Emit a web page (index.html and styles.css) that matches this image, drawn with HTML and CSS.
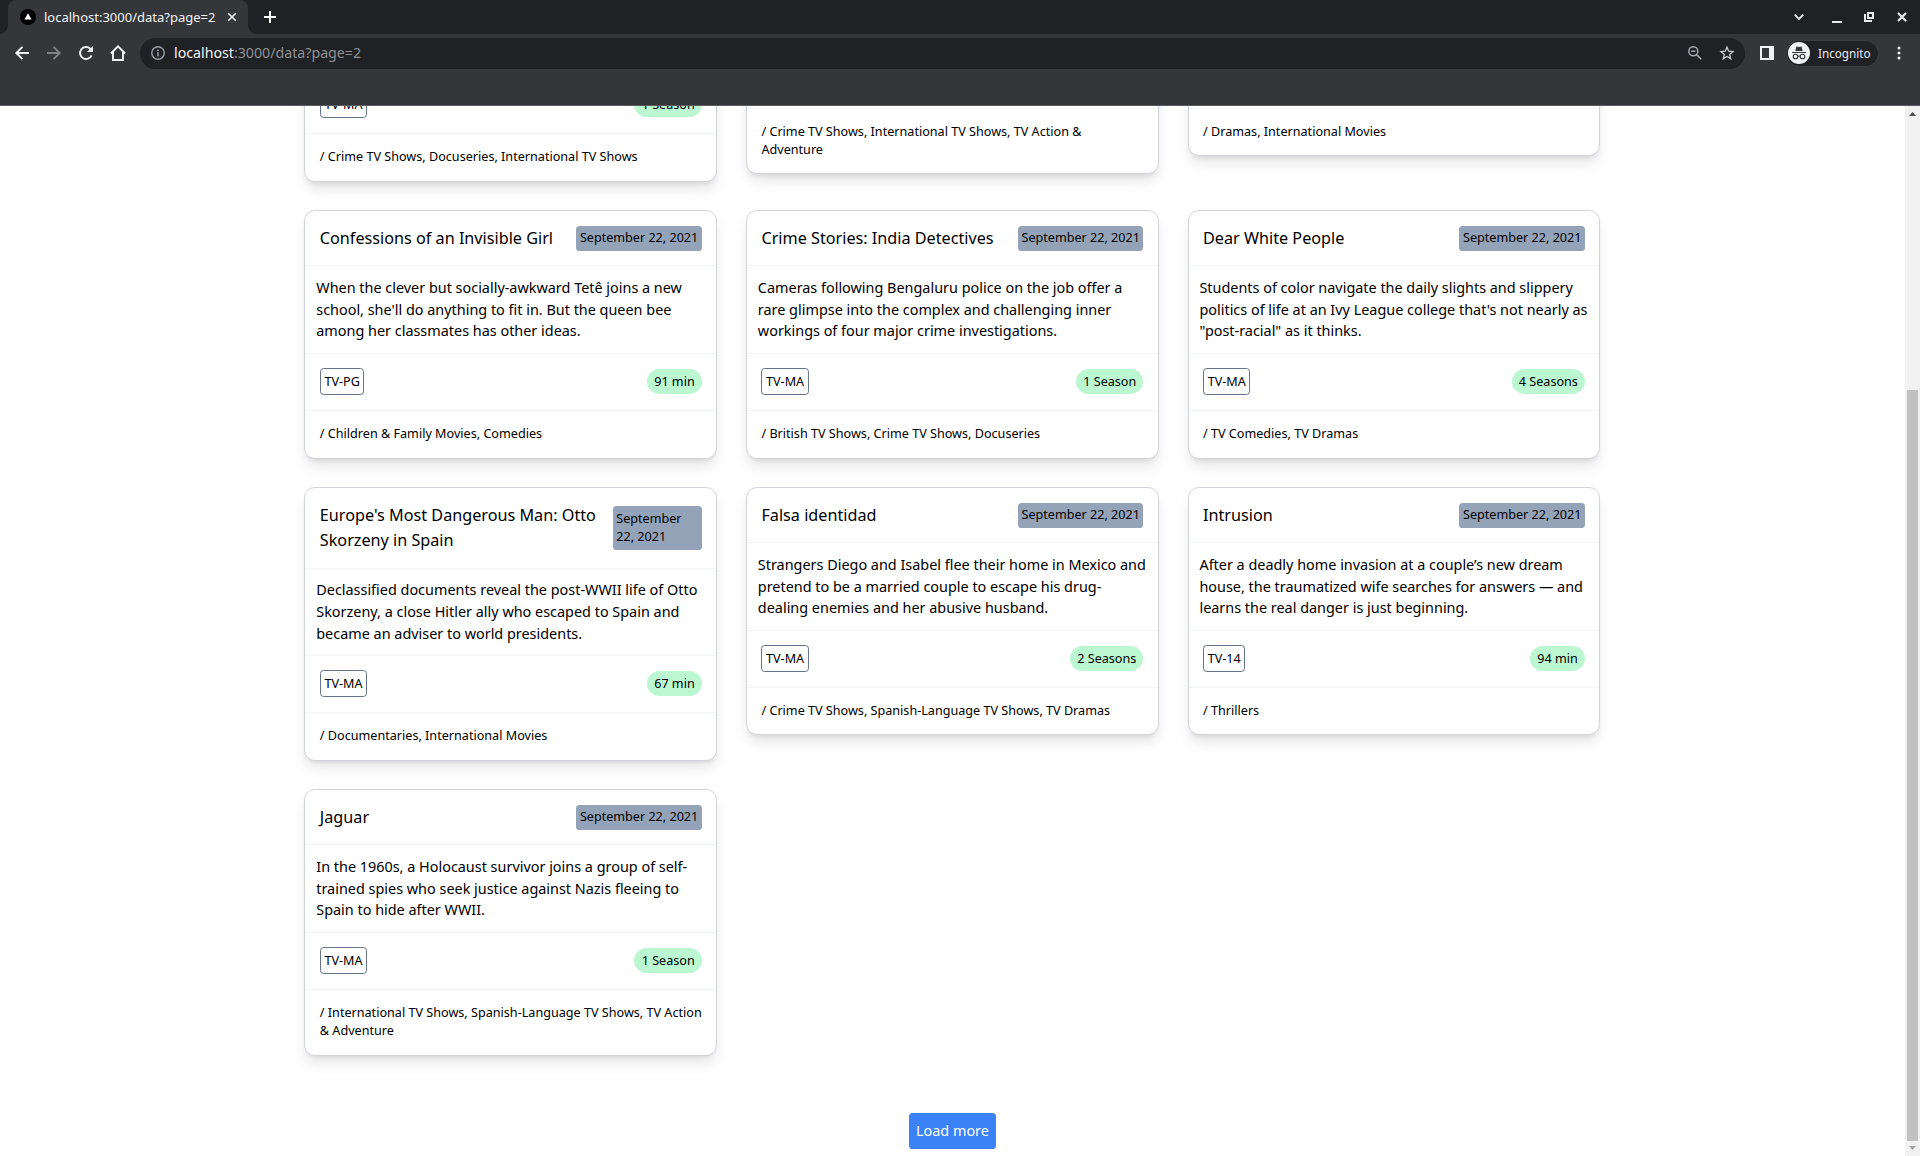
FILE: index.html
```html
<!DOCTYPE html>
<html lang="en">
<head>
<meta charset="utf-8">
<title>localhost:3000/data?page=2</title>
<link rel="stylesheet" href="styles.css">
</head>
<body>
<header class="browser">
  <div class="tabstrip">
    <div class="tab">
      <svg class="favicon" viewBox="0 0 16 16"><circle cx="8" cy="8" r="8" fill="#000"/><path d="M8 4.2 11.6 10.6H4.4z" fill="#fff"/></svg>
      <span class="tab-title">localhost:3000/data?page=2</span>
      <svg class="tab-close" viewBox="0 0 10 10"><path d="M1.2 1.2l7.6 7.6M8.8 1.2L1.2 8.8" stroke="#f1f3f4" stroke-width="1.6"/></svg>
    </div>
    <svg class="new-tab" viewBox="0 0 12 12"><path d="M6 0v12M0 6h12" stroke="#fff" stroke-width="2"/></svg>
    <div class="window-controls">
      <svg width="10" height="6" viewBox="0 0 10 6"><path d="M.7.7 5 5 9.300.7" fill="none" stroke="#e8eaed" stroke-width="1.8"/></svg>
      <svg class="minimize" width="10" height="10" viewBox="0 0 10 10"><path d="M0 9h10" stroke="#e8eaed" stroke-width="2"/></svg>
      <svg class="restore" width="10" height="10" viewBox="0 0 10 10"><path d="M4 1h5v5H4zM1 2v7h7" fill="none" stroke="#e8eaed" stroke-width="2"/></svg>
      <svg class="close" width="10" height="10" viewBox="0 0 10 10"><path d="M1 1l8 8M9 1L1 9" stroke="#e8eaed" stroke-width="2.2"/></svg>
    </div>
  </div>
  <div class="toolbar">
    <div class="nav">
      <svg width="14" height="14" viewBox="0 0 14 14"><path d="M14 7H1.500M7.500.8 1.300 7l6.200 6.200" fill="none" stroke="#f1f3f4" stroke-width="1.9"/></svg>
      <svg width="14" height="14" viewBox="0 0 14 14"><path d="M0 7h12.500M6.500.8 12.700 7l-6.200 6.200" fill="none" stroke="#808185" stroke-width="1.9"/></svg>
      <svg width="14" height="14" viewBox="0 0 14 14"><path d="M12.600 9.300A6 6 0 1 1 11.200 2.700L12 3.500" fill="none" stroke="#f1f3f4" stroke-width="1.9"/><path d="M14 0v6H8z" fill="#f1f3f4"/></svg>
      <svg width="16" height="16" viewBox="0 0 16 16"><path d="M3 8v7h10V8M.9 8.500 8 1.400l7.100 7.100M1.500 8H4M12 8h2.500" fill="none" stroke="#f1f3f4" stroke-width="1.900"/></svg>
    </div>
    <div class="omnibox">
      <svg width="14" height="14" viewBox="0 0 14 14"><circle cx="7" cy="7" r="6.250" fill="none" stroke="#9aa0a6" stroke-width="1.400"/><path d="M7 6.200v4.300M7 3.500v1.500" stroke="#9aa0a6" stroke-width="1.500"/></svg>
      <span class="url">localhost<span class="url-rest">:3000/data?page=2</span></span>
      <svg class="zoom" width="14" height="14" viewBox="0 0 14 14"><circle cx="5.300" cy="5.300" r="4.500" fill="none" stroke="#a5a8ad" stroke-width="1.500"/><path d="M3.200 5.300h4.200M8.600 8.600l4.600 4.600" stroke="#a5a8ad" stroke-width="1.500"/></svg>
      <svg width="14" height="14" viewBox="0 0 14 14"><path d="M7 1.300 8.700 5.200 13 5.600 9.700 8.500 10.700 12.700 7 10.500 3.300 12.700 4.300 8.500 1 5.600 5.300 5.200z" fill="none" stroke="#c4c7cb" stroke-width="1.400"/></svg>
    </div>
    <svg class="side-panel" width="14" height="14" viewBox="0 0 14 14"><path d="M0 0h14v14H0zM2 2v10h7V2z" fill="#f1f3f4" fill-rule="evenodd"/></svg>
    <div class="profile">
      <svg width="22" height="22" viewBox="0 0 22 22"><circle cx="11" cy="11" r="11" fill="#f1f3f4"/><path d="M7.300 9 8.500 4.500l2.500.5 2.500-.5L14.700 9z" fill="#35363a"/><path d="M4 10.500h14" stroke="#35363a"/><g fill="none" stroke="#35363a" stroke-width="1.100"><circle cx="7.500" cy="14.500" r="2.300"/><circle cx="14.500" cy="14.500" r="2.300"/><path d="M9.800 14.300q1.200-.7 2.400 0"/></g></svg>
      <span>Incognito</span>
    </div>
    <svg class="menu" width="4" height="14" viewBox="0 0 4 14"><g fill="#f1f3f4"><circle cx="2" cy="2" r="1.500"/><circle cx="2" cy="7" r="1.500"/><circle cx="2" cy="12" r="1.500"/></g></svg>
  </div>
</header>
<div class="viewport">
  <main class="page">
    <section class="grid">
      <article class="card">
        <div class="card-head card-head-tall"></div>
        <div class="meta"><span class="rating">TV-MA</span><span class="duration">1 Season</span></div>
        <p class="genres">/ Crime TV Shows, Docuseries, International TV Shows</p>
      </article>
      <article class="card">
        <div class="card-head"></div>
        <div class="meta meta-blank"></div>
        <p class="genres">/ Crime TV Shows, International TV Shows, TV Action &amp; Adventure</p>
      </article>
      <article class="card">
        <div class="card-head"></div>
        <div class="meta meta-blank"></div>
        <p class="genres">/ Dramas, International Movies</p>
      </article>

      <article class="card">
        <div class="card-head"><h2 class="title">Confessions of an Invisible Girl</h2><span class="date">September 22, 2021</span></div>
        <p class="description">When the clever but socially-awkward Tetê joins a new school, she'll do anything to fit in. But the queen bee among her classmates has other ideas.</p>
        <div class="meta"><span class="rating">TV-PG</span><span class="duration">91 min</span></div>
        <p class="genres">/ Children &amp; Family Movies, Comedies</p>
      </article>
      <article class="card">
        <div class="card-head"><h2 class="title">Crime Stories: India Detectives</h2><span class="date">September 22, 2021</span></div>
        <p class="description">Cameras following Bengaluru police on the job offer a rare glimpse into the complex and challenging inner workings of four major crime investigations.</p>
        <div class="meta"><span class="rating">TV-MA</span><span class="duration">1 Season</span></div>
        <p class="genres">/ British TV Shows, Crime TV Shows, Docuseries</p>
      </article>
      <article class="card">
        <div class="card-head"><h2 class="title">Dear White People</h2><span class="date">September 22, 2021</span></div>
        <p class="description">Students of color navigate the daily slights and slippery politics of life at an Ivy League college that's not nearly as "post-racial" as it thinks.</p>
        <div class="meta"><span class="rating">TV-MA</span><span class="duration">4 Seasons</span></div>
        <p class="genres">/ TV Comedies, TV Dramas</p>
      </article>

      <article class="card">
        <div class="card-head"><h2 class="title">Europe's Most Dangerous Man: Otto Skorzeny in Spain</h2><span class="date">September 22, 2021</span></div>
        <p class="description">Declassified documents reveal the post-WWII life of Otto Skorzeny, a close Hitler ally who escaped to Spain and became an adviser to world presidents.</p>
        <div class="meta"><span class="rating">TV-MA</span><span class="duration">67 min</span></div>
        <p class="genres">/ Documentaries, International Movies</p>
      </article>
      <article class="card">
        <div class="card-head"><h2 class="title">Falsa identidad</h2><span class="date">September 22, 2021</span></div>
        <p class="description">Strangers Diego and Isabel flee their home in Mexico and pretend to be a married couple to escape his drug-dealing enemies and her abusive husband.</p>
        <div class="meta"><span class="rating">TV-MA</span><span class="duration">2 Seasons</span></div>
        <p class="genres">/ Crime TV Shows, Spanish-Language TV Shows, TV Dramas</p>
      </article>
      <article class="card">
        <div class="card-head"><h2 class="title">Intrusion</h2><span class="date">September 22, 2021</span></div>
        <p class="description">After a deadly home invasion at a couple’s new dream house, the traumatized wife searches for answers — and learns the real danger is just beginning.</p>
        <div class="meta"><span class="rating">TV-14</span><span class="duration">94 min</span></div>
        <p class="genres">/ Thrillers</p>
      </article>

      <article class="card">
        <div class="card-head"><h2 class="title">Jaguar</h2><span class="date">September 22, 2021</span></div>
        <p class="description">In the 1960s, a Holocaust survivor joins a group of self-trained spies who seek justice against Nazis fleeing to Spain to hide after WWII.</p>
        <div class="meta"><span class="rating">TV-MA</span><span class="duration">1 Season</span></div>
        <p class="genres">/ International TV Shows, Spanish-Language TV Shows, TV Action &amp; Adventure</p>
      </article>
    </section>
    <button class="load-more">Load more</button>
  </main>
  <div class="scrollbar">
    <svg width="7" height="4" viewBox="0 0 7 4"><path d="M0 4 3.500 0 7 4z" fill="#505050"/></svg>
    <div class="thumb"></div>
    <svg width="7" height="4" viewBox="0 0 7 4"><path d="M0 0h7L3.500 4z" fill="#a3a3a3"/></svg>
  </div>
</div>
</body>
</html>
```
FILE: styles.css
```css
* { box-sizing: border-box; margin: 0; padding: 0; }
html, body { height: 100%; overflow: hidden; }
body {
  display: flex;
  flex-direction: column;
  font-family: "Noto Sans", sans-serif;
  color: #000;
  background: #fff;
}
svg { display: block; flex: none; overflow: visible; }

/* Browser frame */
.browser { flex: none; height: 106px; background: #35363a; border-bottom: 1px solid #5b5a5e; }
.tabstrip { display: flex; align-items: center; height: 34px; background: #202124; }
.tab {
  position: relative;
  display: flex;
  align-items: center;
  width: 240px;
  height: 34px;
  margin-left: 8px;
  padding: 0 11px 0 12px;
  background: #35363a;
  border-radius: 8px 8px 0 0;
}
.tab::before, .tab::after {
  content: "";
  position: absolute;
  bottom: 0;
  width: 8px;
  height: 8px;
}
.tab::before { left: -8px; background: radial-gradient(circle at 0 0, transparent 7.5px, #35363a 8px); }
.tab::after { right: -8px; background: radial-gradient(circle at 100% 0, transparent 7.5px, #35363a 8px); }
.favicon { width: 16px; height: 16px; }
.tab-title { margin-left: 8px; font-size: 13px; line-height: 18px; color: #f1f3f4; white-space: nowrap; }
.tab-close { width: 10px; height: 10px; margin-left: auto; }
.new-tab { width: 12px; height: 12px; margin-left: 16px; }
.window-controls { display: flex; align-items: center; margin-left: auto; padding-right: 13px; }
.minimize { margin-left: 28px; margin-top: 2px; }
.restore { margin-left: 22px; }
.close { margin-left: 23px; }

.toolbar { display: flex; align-items: center; height: 38px; padding: 0 15px; }
.nav { display: flex; align-items: center; gap: 18px; width: 125px; }
.nav svg:last-child { margin-left: -1px; }
.omnibox {
  display: flex;
  align-items: center;
  width: 1605px;
  height: 31px;
  padding: 0 11px;
  border-radius: 16px;
  background: #202124;
}
.url { margin-left: 9px; font-size: 14.2px; line-height: 20px; color: #f1f3f4; }
.url-rest { color: #8d9094; }
.zoom { margin-left: auto; margin-right: 18px; }
.side-panel { margin-left: 15px; }
.profile {
  display: flex;
  align-items: center;
  width: 93px;
  height: 27px;
  margin-left: 12px;
  padding-left: 2px;
  border-radius: 14px;
  background: #202124;
  border: 1px solid #3c3d41;
  font-size: 11.7px;
  color: #e8eaed;
}
.profile svg { margin-left: -1px; }
.profile span { margin-left: 8px; }
.menu { margin-left: 17.5px; }

/* Page, shown scrolled to its end */
.viewport { display: flex; flex: 1; min-height: 0; overflow: hidden; }
.page {
  display: flex;
  flex: 1;
  flex-direction: column;
  align-items: center;
  justify-content: flex-end;
  padding: 0 .1px 6.88px 0;
}
.grid {
  display: grid;
  flex: none;
  grid-template-columns: repeat(3, 412.8px);
  align-items: start;
  gap: 28.8px;
}
.card {
  border: 1px solid #d1d5db;
  border-radius: 10.8px;
  background: #fff;
  box-shadow: 0 9px 13.5px -2.7px rgba(0, 0, 0, .1), 0 3.6px 5.4px -3.6px rgba(0, 0, 0, .1);
}
.card-head {
  display: flex;
  align-items: center;
  justify-content: space-between;
  min-height: 55px;
  padding: 14.4px;
  border-bottom: 1px solid #f3f4f6;
}
.card-head-tall { min-height: 80.2px; }
.title { font-size: 16.2px; font-weight: 400; line-height: 25.2px; }
.date {
  flex-shrink: 1.05;
  padding: 3.6px;
  border-radius: 3.6px;
  background: #94a3b8;
  font-size: 12.6px;
  line-height: 18px;
}
.description {
  padding: 10.8px;
  border-bottom: 1px solid #f3f4f6;
  font-size: 14.42px;
  line-height: 21.6px;
}
.meta {
  display: flex;
  align-items: center;
  justify-content: space-between;
  padding: 14.4px;
  border-bottom: 1px solid #f3f4f6;
  font-size: 12.6px;
  line-height: 18px;
}
.meta-blank { min-height: 57px; }
.rating { padding: 3.6px; border: 1px solid #64748b; border-radius: 3.6px; }
.duration { padding: 3.6px 7.2px; border-radius: 999px; background: #bbf7d0; }
.genres { padding: 14.4px; font-size: 12.62px; line-height: 18px; }
.load-more {
  flex: none;
  margin-top: 57.6px;
  padding: 7.2px;
  border: 0;
  border-radius: 3.6px;
  background: #3b82f6;
  color: #fff;
  font: 14.4px/21.6px "Noto Sans", sans-serif;
}

.scrollbar {
  display: flex;
  flex-direction: column;
  align-items: center;
  width: 15px;
  padding: 6px 0;
  background: #f1f1f1;
}
.thumb { width: 11px; height: 751px; margin-top: auto; margin-bottom: 5px; background: #c1c1c1; }
```
